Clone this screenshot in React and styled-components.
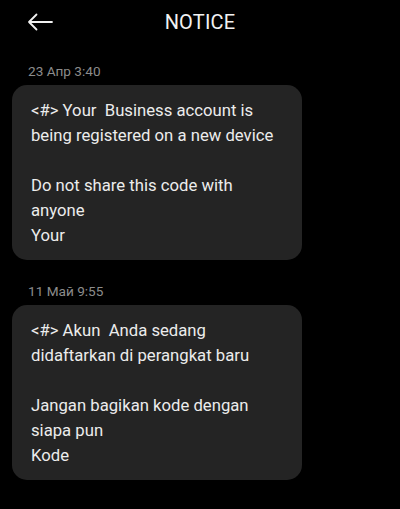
import React from 'react';
import styled, { createGlobalStyle } from 'styled-components';

const Global = createGlobalStyle`
  html, body {
    margin: 0;
    padding: 0;
    background: #000;
  }
  body {
    font-family: Roboto, "Noto Sans", sans-serif;
    -webkit-font-smoothing: antialiased;
  }
`;

const Screen = styled.div`
  width: 400px;
  min-height: 509px;
  background: #000;
  color: #e8e8e8;
  overflow: hidden;
`;

const TopBar = styled.header`
  position: relative;
  height: 44px;
  display: flex;
  align-items: center;
  justify-content: center;
`;

const BackButton = styled.button`
  position: absolute;
  left: 26px;
  top: 11px;
  width: 28px;
  height: 22px;
  padding: 0;
  border: 0;
  background: none;
  display: flex;
  align-items: center;
  justify-content: center;
`;

const Title = styled.h1`
  margin: 0;
  font-size: 20px;
  font-weight: 400;
  color: #f2f2f2;
  letter-spacing: 0.2px;
`;

const Feed = styled.main`
  display: flex;
  flex-direction: column;
  padding: 19px 12px 0;
`;

const Group = styled.section`
  display: flex;
  flex-direction: column;
  margin-bottom: 23px;
`;

const Stamp = styled.div`
  font-size: 13.6px;
  line-height: 16px;
  color: #8c8c8c;
  padding-left: 16px;
  margin-bottom: 6px;
`;

const Bubble = styled.div`
  width: 290px;
  box-sizing: border-box;
  background: #242424;
  border-radius: 15px;
  padding: 13px 19px 12px;
  font-size: 16.7px;
  line-height: 25px;
  color: #ececec;
  white-space: pre;
`;

const messages = [
  {
    time: '23 Апр 3:40',
    text: '<#> Your  Business account is\nbeing registered on a new device\n\nDo not share this code with\nanyone\nYour',
  },
  {
    time: '11 Май 9:55',
    text: '<#> Akun  Anda sedang\ndidaftarkan di perangkat baru\n\nJangan bagikan kode dengan\nsiapa pun\nKode',
  },
];

export default function App() {
  return (
    <Screen>
      <Global />
      <TopBar>
        <BackButton aria-label="back">
          <svg width="26" height="18" viewBox="0 0 26 18" fill="none">
            <path d="M25 9H2M9.5 1.5L2 9l7.5 7.5" stroke="#f0f0f0" strokeWidth="1.8" strokeLinecap="round" strokeLinejoin="round" />
          </svg>
        </BackButton>
        <Title>NOTICE</Title>
      </TopBar>
      <Feed>
        {messages.map((m) => (
          <Group key={m.time}>
            <Stamp>{m.time}</Stamp>
            <Bubble>{m.text}</Bubble>
          </Group>
        ))}
      </Feed>
    </Screen>
  );
}
